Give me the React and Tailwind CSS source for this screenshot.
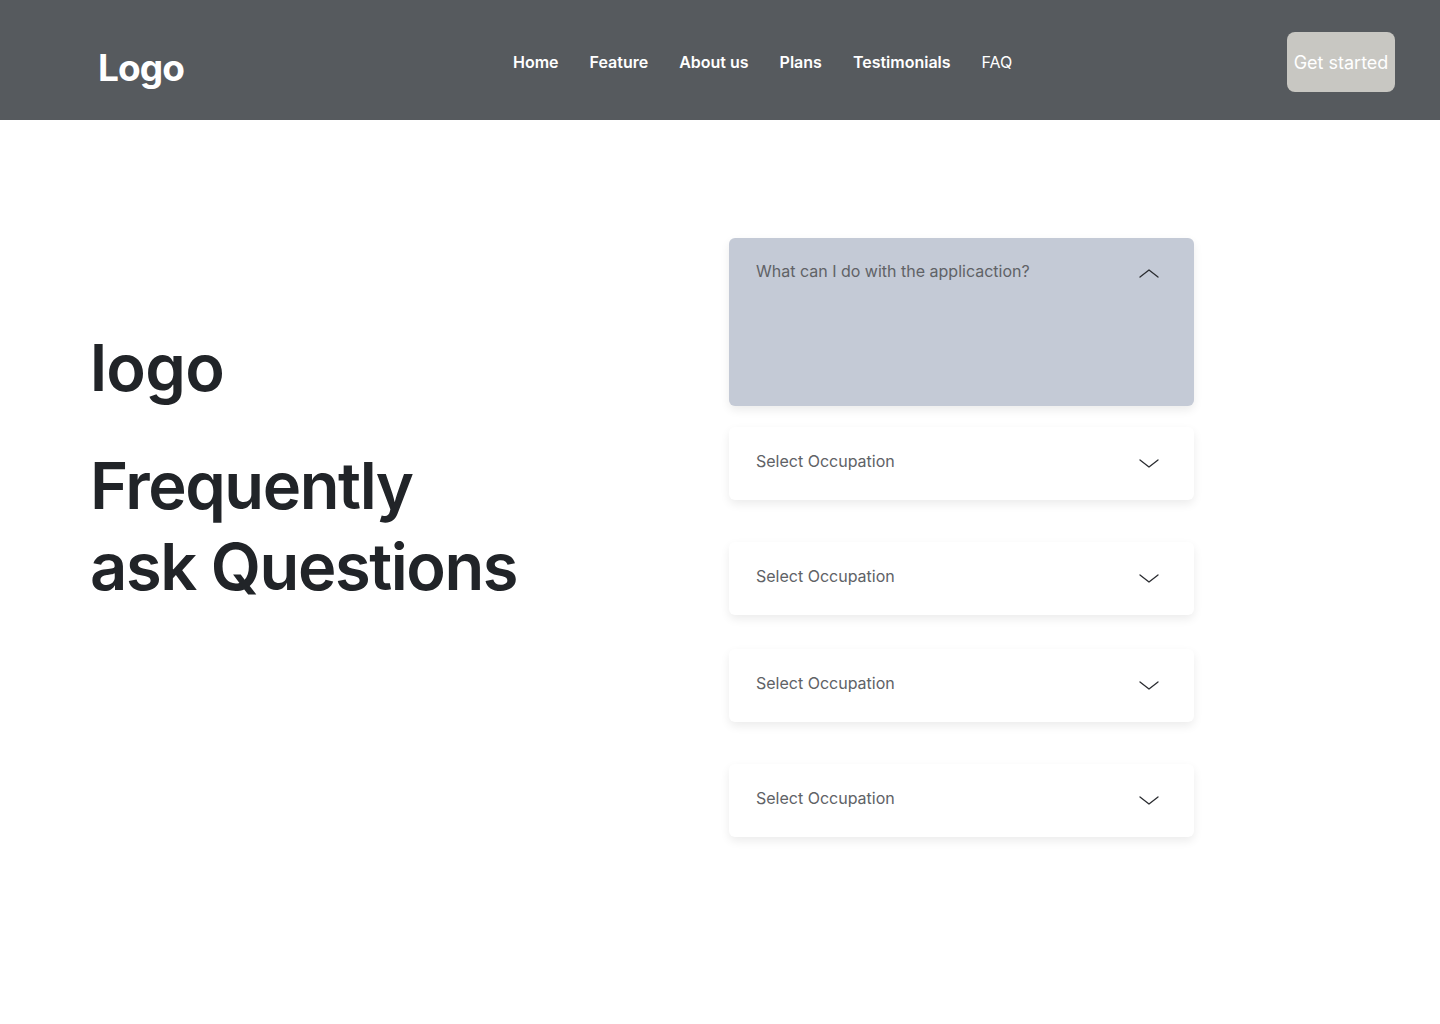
import React, { useState } from "react";

const navLinks = ["Home", "Feature", "About us", "Plans", "Testimonials"];

const Chevron = ({ up }) => (
  <svg width="20" height="10" viewBox="0 0 20 10" fill="none" className="shrink-0">
    <polyline
      points={up ? "1,9 10,2 19,9" : "1,1 10,8 19,1"}
      stroke="#2b2d31"
      strokeWidth="1.3"
      strokeLinecap="round"
      strokeLinejoin="round"
    />
  </svg>
);

const faqs = [
  { q: "What can I do with the applicaction?", mt: "mt-0" },
  { q: "Select Occupation", mt: "mt-[21px]" },
  { q: "Select Occupation", mt: "mt-[42px]" },
  { q: "Select Occupation", mt: "mt-[34px]" },
  { q: "Select Occupation", mt: "mt-[42px]" },
];

const App = () => {
  const [open, setOpen] = useState(0);

  return (
    <div className="min-h-[1024px] bg-white font-['Inter',sans-serif]">
      {/* header */}
      <header className="flex h-[120px] items-center bg-[#565a5e] pl-[98px] pr-[45px] pt-[4px]">
        <div className="w-[350px] pt-[12px] text-[37px] font-bold tracking-tight text-white">
          Logo
        </div>
        <nav className="ml-[65px] flex items-center gap-[31px] text-[16px] font-semibold text-white">
          {navLinks.map((link) => (
            <a key={link} href="#" className="leading-none">
              {link}
            </a>
          ))}
          <a href="#" className="font-normal leading-none">
            FAQ
          </a>
        </nav>
        <button className="ml-auto h-[60px] w-[108px] rounded-lg bg-[#c8c7c2] text-[18px] text-white">
          Get started
        </button>
      </header>

      {/* content */}
      <main className="flex pt-[118px]">
        <div className="w-[729px] shrink-0 pl-[90px] pt-[97px] text-[#212428]">
          <h2 className="text-[65px] font-semibold leading-none tracking-[-0.01em]">
            logo
          </h2>
          <h1 className="mt-[45px] text-[65px] font-semibold leading-[81px] tracking-[-0.022em]">
            Frequently
            <br />
            ask Questions
          </h1>
        </div>

        <div className="flex w-[465px] shrink-0 flex-col">
          {faqs.map((item, i) => {
            const isOpen = open === i;
            return (
              <div
                key={i}
                onClick={() => setOpen(isOpen ? -1 : i)}
                className={`${item.mt} rounded-md px-[27px] shadow-[0_4px_10px_rgba(0,0,0,0.08)] ${
                  isOpen ? "h-[168px] bg-[#c4cad6] pt-[23px]" : "h-[73px] bg-white pt-[24px]"
                }`}
              >
                <div className="flex items-start justify-between">
                  <span className="text-[16px] leading-[20px] text-[#606266]">
                    {item.q}
                  </span>
                  <div className={`mr-[8px] ${isOpen ? "pt-[7px]" : "pt-[8px]"}`}>
                    <Chevron up={isOpen} />
                  </div>
                </div>
              </div>
            );
          })}
        </div>
      </main>
    </div>
  );
};

export default App;
